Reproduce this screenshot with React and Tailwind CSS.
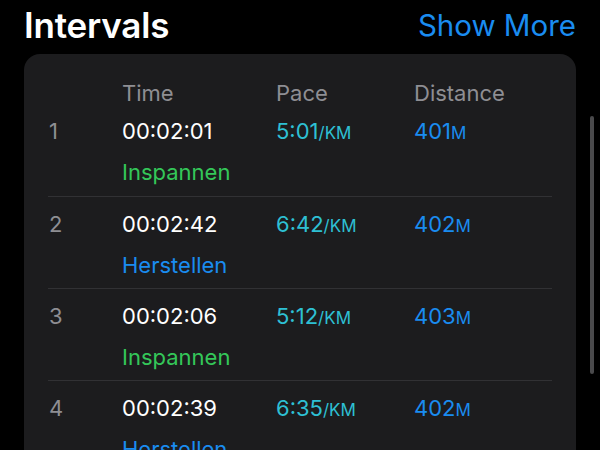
import React from 'react';

const intervals = [
    { n: 1, time: '00:02:01', pace: '5:01', dist: '401', kind: 'Inspannen' },
    { n: 2, time: '00:02:42', pace: '6:42', dist: '402', kind: 'Herstellen' },
    { n: 3, time: '00:02:06', pace: '5:12', dist: '403', kind: 'Inspannen' },
    { n: 4, time: '00:02:39', pace: '6:35', dist: '402', kind: 'Herstellen' },
];

const App = () => {
    return (
        <div className="relative h-[450px] w-[600px] overflow-hidden bg-black font-['Inter','Liberation_Sans',sans-serif]">
            <div className="flex items-end justify-between px-6 pt-[3px]">
                <h2 className="text-[35px] font-semibold leading-[44px] tracking-[-0.2px] text-white">Intervals</h2>
                <button className="text-[29.5px] leading-[44px] text-[#1a8cf0]">Show More</button>
            </div>

            <div className="mx-6 mt-[7px] rounded-2xl bg-[#1c1c1e] px-6 pt-[25px]">
                <div className="grid grid-cols-[73px_154px_138px_1fr] pl-px text-[22px] leading-[28px] text-[#8e8e93]">
                    <span />
                    <span>Time</span>
                    <span>Pace</span>
                    <span>Distance</span>
                </div>

                {intervals.map((it, i) => (
                    <div
                        key={it.n}
                        className={`grid grid-cols-[73px_154px_138px_1fr] border-b border-[#313134] pl-px ${i === 0 ? 'pt-[10px] pb-[10px]' : 'pt-[13px] pb-[9px]'}`}
                    >
                        <span className="text-[22px] leading-[28px] text-[#8e8e93]">{it.n}</span>
                        <div className="flex flex-col gap-[13px]">
                            <span className="text-[22px] leading-[28px] text-white">{it.time}</span>
                            <span className={`text-[22px] leading-[28px] ${it.kind === 'Inspannen' ? 'text-[#34c759]' : 'text-[#1a8cf0]'}`}>
                                {it.kind}
                            </span>
                        </div>
                        <span className="text-[22px] leading-[28px] text-[#2ec0d4]">
                            {it.pace}
                            <span className="text-[17px]">/KM</span>
                        </span>
                        <span className="text-[22px] leading-[28px] text-[#1a8cf0]">
                            {it.dist}
                            <span className="text-[17px]">M</span>
                        </span>
                    </div>
                ))}
            </div>

            {/* scroll indicator */}
            <div className="absolute left-[590px] top-[116px] h-[258px] w-[4px] rounded-full bg-[#4a4a4c]" />
        </div>
    );
};

export default App;
